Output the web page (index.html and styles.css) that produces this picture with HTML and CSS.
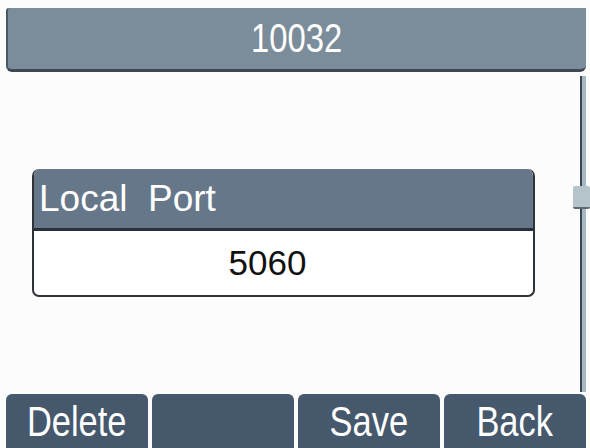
FILE: index.html
```html
<!DOCTYPE html>
<html lang="en">
<head>
    <meta charset="UTF-8">
    <title>Account 10032 - Local Port</title>
    <link rel="stylesheet" href="styles.css">
</head>
<body>
    <div class="screen">
        <div class="title-bar"><span class="narrow">10032</span></div>

        <div class="main">
            <div class="content">
                <div class="dialog">
                    <div class="dialog-title">Local&nbsp; Port</div>
                    <div class="dialog-value">5060</div>
                </div>
            </div>
            <div class="scrollbar">
                <div class="track">
                    <div class="thumb"></div>
                </div>
            </div>
        </div>

        <div class="softkeys">
            <div class="softkey"><span class="narrow">Delete</span></div>
            <div class="softkey"></div>
            <div class="softkey"><span class="narrow">Save</span></div>
            <div class="softkey"><span class="narrow">Back</span></div>
        </div>
    </div>
</body>
</html>
```

FILE: styles.css
```css
body {
    margin: 0;
    font-family: 'Liberation Sans', Arial, sans-serif;
    background-color: #fcfcfc;
}
.screen {
    width: 590px;
    height: 448px;
    display: flex;
    flex-direction: column;
    background-color: #fcfcfc;
    overflow: hidden;
}
.narrow {
    display: inline-block;
    transform: scaleX(0.82);
}
.title-bar {
    margin: 8px 4px 0 6px;
    height: 64px;
    box-sizing: border-box;
    background-color: #7b8c9a;
    border-left: 2px solid #4a5866;
    border-bottom: 3px solid #3c4954;
    border-radius: 3px 0 6px 6px;
    display: flex;
    align-items: center;
    justify-content: center;
    color: #fff;
    font-size: 40px;
}
.main {
    flex: 1;
    display: flex;
}
.content {
    flex: 1;
    display: flex;
    align-items: center;
    padding-left: 32px;
}
.dialog {
    width: 499px;
    border-radius: 7px;
    overflow: hidden;
    border: 2px solid #2f343a;
    border-top: none;
    background-color: #fff;
}
.dialog-title {
    height: 62px;
    box-sizing: border-box;
    background-color: #67778a;
    border-bottom: 3px solid #28303c;
    color: #fff;
    font-size: 37px;
    padding-left: 5px;
    display: flex;
    align-items: center;
}
.dialog-value {
    height: 64px;
    display: flex;
    align-items: center;
    justify-content: center;
    padding-right: 32px;
    color: #111;
    font-size: 35px;
}
.scrollbar {
    width: 18px;
    padding: 4px 0 2px;
    display: flex;
    justify-content: flex-start;
}
.track {
    position: relative;
    margin-left: 8px;
    width: 4px;
    background-color: #a8b8c2;
    border-left: 2px solid #3a4650;
}
.thumb {
    position: absolute;
    top: 110px;
    left: -9px;
    width: 17px;
    height: 23px;
    box-sizing: border-box;
    background-color: #b4c4ca;
    border-bottom: 2px solid #5d6a72;
    border-radius: 2px;
}
.softkeys {
    height: 54px;
    padding: 0 4px 0 6px;
    display: grid;
    grid-template-columns: repeat(4, 1fr);
    gap: 4px;
}
.softkey {
    background-color: #46596c;
    border-radius: 6px 6px 0 0;
    color: #fff;
    font-size: 42px;
    display: flex;
    align-items: center;
    justify-content: center;
    padding-top: 2px;
}
```
